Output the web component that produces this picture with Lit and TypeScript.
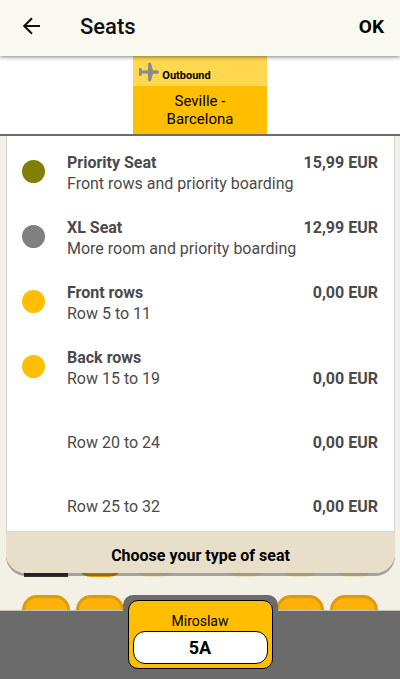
import { LitElement, html, css, nothing } from "lit";
import { customElement, property } from "lit/decorators.js";
import { classMap } from "lit/directives/class-map.js";

type Tone = "priority" | "xl" | "standard";
interface SeatRange { label: string; price?: string; }
interface SeatType { tone: Tone; title: string; price?: string; ranges: SeatRange[]; }

const SEAT_TYPES: SeatType[] = [
  { tone: "priority", title: "Priority Seat", price: "15,99 EUR", ranges: [{ label: "Front rows and priority boarding" }] },
  { tone: "xl", title: "XL Seat", price: "12,99 EUR", ranges: [{ label: "More room and priority boarding" }] },
  { tone: "standard", title: "Front rows", price: "0,00 EUR", ranges: [{ label: "Row 5 to 11" }] },
  {
    tone: "standard",
    title: "Back rows",
    ranges: [
      { label: "Row 15 to 19", price: "0,00 EUR" },
      { label: "Row 20 to 24", price: "0,00 EUR" },
      { label: "Row 25 to 32", price: "0,00 EUR" },
    ],
  },
];

type Seat = "free" | "taken" | "picked";
const CABIN: Seat[][] = [
  ["picked", "free", "taken", "taken", "taken", "taken"],
  ["free", "free", "taken", "taken", "free", "free"],
];

@customElement("seat-legend")
class SeatLegend extends LitElement {
  @property({ attribute: false }) types: SeatType[] = [];

  static styles = css`
    :host {
      display: block;
      position: relative;
      z-index: 1;
      margin: 0 5px 0 6px;
      border-radius: 0 0 20px 20px;
      box-shadow: 0 3px 0 rgba(0, 0, 0, 0.32);
      color: #4a4a4a;
      font-size: 16px;
      line-height: 21px;
    }
    .list {
      display: flex;
      flex-direction: column;
      gap: 23px;
      margin: 0;
      padding: 16px 16px 14px 15px;
      list-style: none;
      background: #fff;
      border: 1px solid #d6d6d6;
      border-top: 0;
    }
    .type { display: flex; }
    .dot {
      flex: none;
      width: 23px;
      height: 23px;
      margin: 8px 22px 0 0;
      border-radius: 50%;
    }
    .priority { background: #808000; }
    .xl { background: #808080; }
    .standard { background: #ffbf00; }
    .details { flex: 1; }
    .line { display: flex; justify-content: space-between; }
    .title, .price { font-weight: 700; }
    .range + .range { margin-top: 43px; }
    .choose {
      display: block;
      width: 100%;
      height: 41px;
      padding: 5px 0 0;
      border: 0;
      border-radius: 0 0 20px 20px;
      background: #e8dfcb;
      color: #000;
      font: 700 16px/21px Roboto, sans-serif;
    }
  `;

  render() {
    return html`
      <ul class="list">
        ${this.types.map((t) => html`
          <li class="type">
            <span class=${classMap({ dot: true, [t.tone]: true })}></span>
            <div class="details">
              <div class="line">
                <span class="title">${t.title}</span>
                ${t.price ? html`<span class="price">${t.price}</span>` : nothing}
              </div>
              ${t.ranges.map((r) => html`
                <div class="line range">
                  <span>${r.label}</span>
                  ${r.price ? html`<span class="price">${r.price}</span>` : nothing}
                </div>`)}
            </div>
          </li>`)}
      </ul>
      <button class="choose" type="button">Choose your type of seat</button>
    `;
  }
}

@customElement("cabin-map")
class CabinMap extends LitElement {
  @property({ attribute: false }) rows: Seat[][] = [];

  /* The first row slides up behind the legend panel. */
  static styles = css`
    :host {
      display: flex;
      flex-direction: column;
      gap: 18px;
      margin-top: -44px;
      padding: 0 22px;
    }
    .row {
      display: grid;
      grid-template-columns: repeat(3, 48fr) 32fr repeat(3, 48fr);
      column-gap: 6px;
    }
    .seat {
      height: 48px;
      padding: 0;
      box-sizing: border-box;
      border: 3px solid #dc9b08;
      border-radius: 15px;
      background: #ffb10a;
    }
    .seat:nth-child(4) { grid-column: 5; }
    .taken { border-color: #f0e4bf; background: #f0e4bf; margin: 0 3px; }
    .picked { border-color: #333; background: #333; border-radius: 0; margin: 0 2px; }
  `;

  render() {
    return this.rows.map((row) => html`
      <div class="row">
        ${row.map((s) => html`<button type="button" aria-label="Seat" class=${classMap({ seat: true, [s]: true })} ?disabled=${s === "taken"}></button>`)}
      </div>`);
  }
}

@customElement("app-root")
class AppRoot extends LitElement {
  static styles = css`
    :host {
      display: flex;
      flex-direction: column;
      height: 100vh;
      background: #f3f0e5;
      color: #000;
      font-family: Roboto, "Liberation Sans", sans-serif;
    }
    button { font-family: inherit; color: inherit; padding: 0; border: 0; background: none; }
    .bar {
      display: flex;
      align-items: center;
      position: relative;
      z-index: 3;
      height: 56px;
      box-sizing: border-box;
      padding: 0 16px 4px 20px;
      background: #f9f9f0;
      box-shadow: 0 1px 4px rgba(0, 0, 0, 0.5);
    }
    .back { display: flex; width: 24px; height: 24px; }
    .heading { flex: 1; margin: 2px 0 0 36px; font-size: 22px; line-height: 28px; font-weight: 500; color: #111; }
    .ok { font-size: 19px; line-height: 24px; font-weight: 700; margin-top: 2px; }
    .flights {
      display: flex;
      justify-content: center;
      position: relative;
      z-index: 2;
      background: #fff;
      border-bottom: 2px solid #6b6b6b;
    }
    .flight { width: 33.333%; height: 78px; background: #ffbf00; }
    .direction {
      display: flex;
      align-items: center;
      gap: 3px;
      height: 30px;
      box-sizing: border-box;
      padding: 5px 0 0 6px;
      background: #ffd850;
      font-size: 11px;
      line-height: 14px;
      font-weight: 700;
    }
    .plane { margin-top: -3px; }
    .direction span { margin-top: 4px; }
    .route { display: block; height: 48px; box-sizing: border-box; padding: 6px 24px; font-size: 15px; line-height: 18px; }
    .cabin { flex: 1; min-height: 0; overflow: hidden; }
    .passengers {
      display: flex;
      justify-content: center;
      position: relative;
      z-index: 2;
      height: 68px;
      background: #6b6b6b;
      box-shadow: 0 -1px 0 #c4c2b8;
    }
    .slot {
      width: 155px;
      height: 84px;
      margin-top: -16px;
      box-sizing: border-box;
      padding: 5px;
      border-radius: 10px 10px 0 0;
      background: #6b6b6b;
    }
    .passenger {
      display: flex;
      flex-direction: column;
      width: 100%;
      height: 69px;
      box-sizing: border-box;
      padding: 10px 4px 4px;
      border: 1px solid #000;
      border-radius: 10px;
      background: #ffbf00;
      font-size: 14px;
      line-height: 20px;
    }
    .name { display: block; width: 100%; }
    .seat-no {
      display: block;
      width: 100%;
      height: 33px;
      box-sizing: border-box;
      border: 1px solid #000;
      border-radius: 12px;
      background: #fff;
      font-size: 18px;
      line-height: 32px;
      font-weight: 700;
    }
  `;

  render() {
    return html`
      <header class="bar">
        <button class="back" type="button" aria-label="Back">
          <svg width="24" height="24" viewBox="0 0 24 24" fill="none" stroke="#111" stroke-width="2">
            <path d="M20 12H4.500M12 4.200 4.200 12l7.800 7.800" />
          </svg>
        </button>
        <h1 class="heading">Seats</h1>
        <button class="ok" type="button">OK</button>
      </header>
      <nav class="flights">
        <button class="flight" type="button">
          <span class="direction">
            <svg class="plane" width="20" height="20" viewBox="0 0 20 20" fill="#8b8b8b">
              <path d="M0 6h2l1.500 2.700 5.500-.5V2.500C9 1.300 9.500.8 10.500.8h1.300L14 8.200h3.500c1.500 0 2.500.9 2.500 1.800s-1 1.800-2.500 1.800H14l-2.200 7.400h-1.300C9.500 19.200 9 18.700 9 17.500v-5.700l-5.500-.5L2 14H0z" />
            </svg>
            <span>Outbound</span>
          </span>
          <span class="route">Seville - Barcelona</span>
        </button>
      </nav>
      <main class="cabin">
        <seat-legend .types=${SEAT_TYPES}></seat-legend>
        <cabin-map .rows=${CABIN}></cabin-map>
      </main>
      <footer class="passengers">
        <div class="slot">
          <button class="passenger" type="button">
            <span class="name">Miroslaw</span>
            <span class="seat-no">5A</span>
          </button>
        </div>
      </footer>
    `;
  }
}
